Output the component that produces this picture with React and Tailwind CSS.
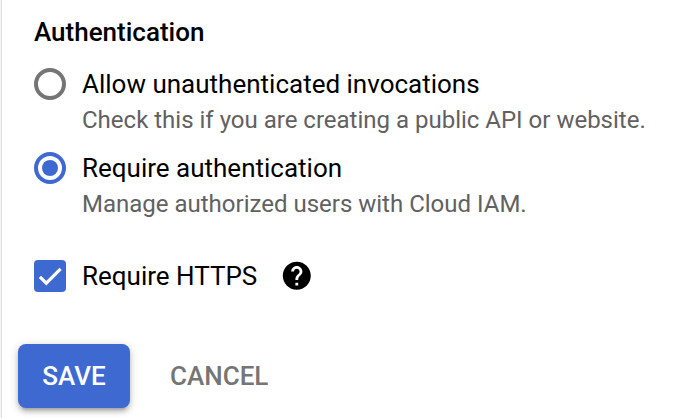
import { MdHelp } from 'react-icons/md';

function Radio({ checked }) {
  return (
    <span
      className={`flex size-8 shrink-0 items-center justify-center rounded-full border-4 ${
        checked ? 'border-[#3d69d0]' : 'border-[#757575]'
      }`}
    >
      {checked && <span className="size-4 rounded-full bg-[#3d69d0]" />}
    </span>
  );
}

function RadioOption({ checked, label, description }) {
  return (
    <div className="flex h-[84px] gap-4">
      <Radio checked={checked} />
      <div className="whitespace-nowrap">
        <div className="text-[26px] leading-8 text-black">{label}</div>
        <div className="mt-1 text-2xl leading-8 text-[#616161]">{description}</div>
      </div>
    </div>
  );
}

export default function App() {
  return (
    <div className="h-[418px] w-[698px] overflow-hidden border-l border-[#f5f5f5] bg-white font-['Roboto',sans-serif] antialiased">
      <div className="h-full border-l border-[#e0e0e0] pl-4">
        <div className="pl-4">
          <h2 className="pt-4 text-[26px] leading-8 font-medium text-black">Authentication</h2>
          <div className="pt-5">
            <RadioOption
              label="Allow unauthenticated invocations"
              description="Check this if you are creating a public API or website."
            />
            <RadioOption
              checked
              label="Require authentication"
              description="Manage authorized users with Cloud IAM."
            />
          </div>
          <div className="mt-6 flex h-8 items-center">
            <span className="size-8 rounded bg-[#3d69d0]">
              <svg viewBox="0 0 32 32" className="size-8" fill="none" stroke="white" strokeWidth="3.2">
                <path d="M5.9 16.8 12.3 23.2 26.6 8.9" />
              </svg>
            </span>
            <span className="ml-4 text-[26px] leading-8 text-black">Require HTTPS</span>
            <MdHelp className="ml-[23px] size-[33.6px] text-black" />
          </div>
        </div>
        <div className="mt-[52px] flex">
          <button className="h-16 w-28 rounded-lg bg-[#3d69d0] text-[26px] font-medium text-white shadow-[0_2px_10px_rgba(0,0,0,0.2),0_4px_4px_rgba(0,0,0,0.14),0_6px_2px_-4px_rgba(0,0,0,0.12)]">
            SAVE
          </button>
          <button className="ml-4 h-16 px-6 text-[26px] font-medium text-[#757575]">CANCEL</button>
        </div>
      </div>
    </div>
  );
}
